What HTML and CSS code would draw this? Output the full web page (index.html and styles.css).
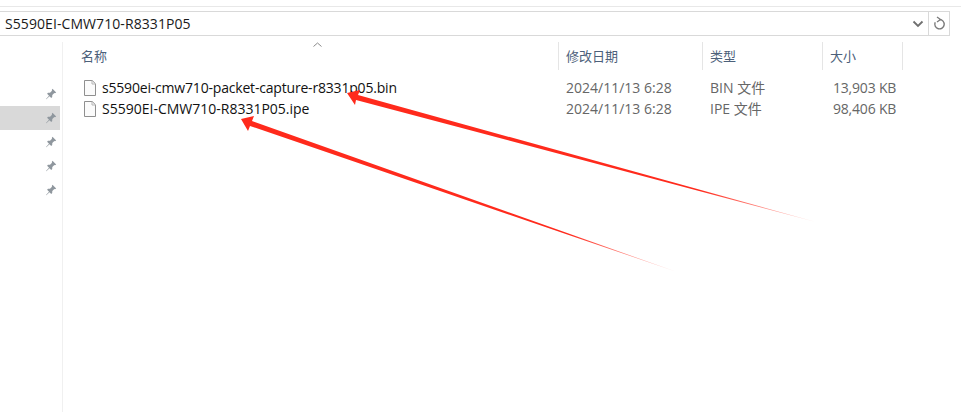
FILE: index.html
```html
<!DOCTYPE html>
<html lang="zh-CN">
<head>
  <meta charset="UTF-8">
  <title>S5590EI-CMW710-R8331P05</title>
  <link rel="stylesheet" href="styles.css">
</head>
<body>
  <div class="window">
    <div class="address-bar">
      <span class="path">S5590EI-CMW710-R8331P05</span>
      <span class="drop">
        <svg width="12" height="8" viewBox="0 0 12 8"><path d="M1.5 1.5 6 6l4.500-4.500" fill="none" stroke="#6f6f6f" stroke-width="1.800"/></svg>
      </span>
      <span class="refresh">
        <svg width="14" height="15" viewBox="0 0 14 15"><path d="M7.500 3.500a4.700 4.700 0 1 1-4.300 2.800" fill="none" stroke="#7a7a7a" stroke-width="1.400"/><path d="M5 1l3.500 2.500L5 6" fill="none" stroke="#7a7a7a" stroke-width="1.300"/></svg>
      </span>
    </div>

    <div class="main">
      <div class="sidebar">
        <div class="pin-row"><svg class="pin" viewBox="0 0 12 12"><use href="#pin-icon"/></svg></div>
        <div class="pin-row selected"><svg class="pin" viewBox="0 0 12 12"><use href="#pin-icon"/></svg></div>
        <div class="pin-row"><svg class="pin" viewBox="0 0 12 12"><use href="#pin-icon"/></svg></div>
        <div class="pin-row"><svg class="pin" viewBox="0 0 12 12"><use href="#pin-icon"/></svg></div>
        <div class="pin-row"><svg class="pin" viewBox="0 0 12 12"><use href="#pin-icon"/></svg></div>
      </div>

      <div class="list">
        <div class="sort-mark">
          <svg width="9" height="5" viewBox="0 0 9 5"><path d="M.5 4.500 4.500 1l4 3.500" fill="none" stroke="#8a8a8a"/></svg>
        </div>
        <div class="columns head">
          <div class="col-head col-name">名称</div>
          <div class="col-head">修改日期</div>
          <div class="col-head">类型</div>
          <div class="col-head">大小</div>
        </div>
        <div class="rows">
          <div class="columns file">
            <div class="file-name tight">
              <svg class="file-icon" viewBox="0 0 12 16"><use href="#file-icon"/></svg>
              s5590ei-cmw710-packet-capture-r8331p05.bin
            </div>
            <div class="cell">2024/11/13 6:28</div>
            <div class="cell">BIN 文件</div>
            <div class="cell size">13,903 KB</div>
          </div>
          <div class="columns file">
            <div class="file-name">
              <svg class="file-icon" viewBox="0 0 12 16"><use href="#file-icon"/></svg>
              S5590EI-CMW710-R8331P05.ipe
            </div>
            <div class="cell">2024/11/13 6:28</div>
            <div class="cell">IPE 文件</div>
            <div class="cell size">98,406 KB</div>
          </div>
        </div>
      </div>
    </div>
  </div>

  <!-- annotation arrows drawn over the screenshot -->
  <svg class="arrows" width="961" height="412" viewBox="0 0 961 412">
    <defs>
      <linearGradient id="fade-1" gradientUnits="userSpaceOnUse" x1="347" y1="93" x2="816" y2="222">
        <stop offset="0" stop-color="#ff2a1c"/>
        <stop offset="0.75" stop-color="#ff2a1c"/>
        <stop offset="1" stop-color="#ff2a1c" stop-opacity="0.2"/>
      </linearGradient>
      <linearGradient id="fade-2" gradientUnits="userSpaceOnUse" x1="241" y1="119" x2="677" y2="272">
        <stop offset="0" stop-color="#ff2a1c"/>
        <stop offset="0.75" stop-color="#ff2a1c"/>
        <stop offset="1" stop-color="#ff2a1c" stop-opacity="0.2"/>
      </linearGradient>
    </defs>
    <polygon fill="url(#fade-1)" points="347,93 360,90 358,95 816,222 356,100 355,105"/>
    <polygon fill="url(#fade-2)" points="241,119 254,116 252,121 677,272 250,126 248,131"/>
  </svg>

  <svg class="sprites" width="0" height="0">
    <symbol id="pin-icon" viewBox="0 0 12 12">
      <path d="M7.500.8 11.200 4.500 10 5.200 9.300 5 7.300 7l-.1 2-1 .9L2.100 5.800l.9-1 2-.1 2-2-.2-.7zM4 7.800 1 11l.3.300L4.500 8.300z" fill="#8f979e"/>
    </symbol>
    <symbol id="file-icon" viewBox="0 0 12 16">
      <path d="M.5.500h7.700l3.300 3.300v11.700H.500z" fill="#fbfbfb" stroke="#8f8f8f"/>
      <path d="M8 .500v3.500h3.500" fill="none" stroke="#b5b5b5"/>
    </symbol>
  </svg>
</body>
</html>
```

FILE: styles.css
```css
html, body {
  margin: 0;
  padding: 0;
  height: 100%;
  overflow: hidden;
  background-color: white;
}

body {
  font-family: "Open Sans", "Noto Sans CJK SC", sans-serif;
  font-size: 14px;
  position: relative;
}

.window {
  height: 100%;
  box-sizing: border-box;
  padding-top: 6px;
  display: flex;
  flex-direction: column;
}

.window::before {
  content: "";
  height: 1px;
  background-color: #e8e8e8;
}

.address-bar {
  margin-top: 4px;
  margin-right: 11px;
  height: 23px;
  display: flex;
  align-items: center;
  border: 1px solid #d9d9d9;
  border-left: none;
  color: #1a1a1a;
}

.path {
  flex-grow: 1;
  padding-left: 5px;
  letter-spacing: 0.08px;
}

.drop {
  width: 20px;
  display: flex;
  justify-content: center;
}

.refresh {
  width: 20px;
  height: 100%;
  display: flex;
  justify-content: center;
  align-items: center;
  border-left: 1px solid #d9d9d9;
}

.main {
  flex-grow: 1;
  display: flex;
  margin-top: 6px;
}

.sidebar {
  width: 62px;
  flex-shrink: 0;
  padding-top: 40px;
  border-right: 1px solid #f0f0f0;
}

.pin-row {
  width: 60px;
  height: 24px;
  display: flex;
  align-items: center;
  justify-content: flex-end;
}

.pin-row.selected {
  background-color: #d9d9d9;
}

.pin {
  width: 12px;
  height: 12px;
  margin-right: 3px;
}

.list {
  flex-grow: 1;
  position: relative;
}

.sort-mark {
  position: absolute;
  left: 250px;
  top: 0;
  line-height: 0;
}

.columns {
  display: grid;
  grid-template-columns: 496px 144px 120px 80px;
}

.head {
  height: 28px;
}

.col-head {
  padding-left: 7px;
  line-height: 28px;
  font-size: 13px;
  color: #4c607a;
  border-right: 1px solid #e5e5e5;
}

.col-name {
  padding-left: 18px;
}

.rows {
  padding-top: 7px;
}

.file {
  height: 21px;
  line-height: 21px;
}

.file-name {
  padding-left: 21px;
  color: #111;
  display: flex;
  align-items: center;
  gap: 6px;
  white-space: nowrap;
}

.file-name.tight {
  letter-spacing: -0.19px;
}

.file-icon {
  width: 12px;
  height: 16px;
  flex-shrink: 0;
}

.cell {
  padding-left: 7px;
  color: #666;
  white-space: nowrap;
}

.size {
  padding-left: 10px;
  letter-spacing: -0.2px;
}

.arrows {
  position: absolute;
  left: 0;
  top: 0;
  pointer-events: none;
}

.sprites {
  position: absolute;
}
```
